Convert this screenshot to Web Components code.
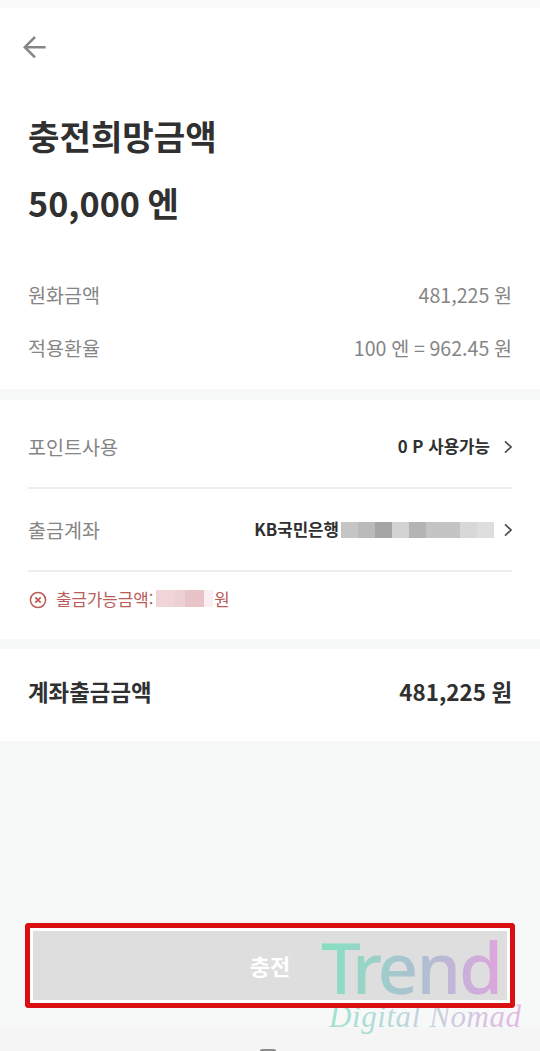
<!DOCTYPE html>
<html lang="ko">
<head>
<meta charset="utf-8">
<title>충전</title>
<style>
  html, body {
    margin: 0;
    height: 100%;
    overflow: hidden;
  }
  body {
    background-color: #f7f9f9;
    color: #303030;
    font-family: "Noto Sans CJK KR", "Noto Sans", sans-serif;
  }
</style>
</head>
<body>
<kk-charge-page></kk-charge-page>
<script>
class KkElement extends HTMLElement {

  constructor() {
    super();
    this.attachShadow({mode: 'open'});
    this.shadowRoot.innerHTML = this.constructor.TEMPLATE;
  }

}

class BackButton extends KkElement {

  static TAG = 'kk-back-button';

  static TEMPLATE = `
<style>
  :host {
    display: block;
    height: 24px;
  }
  svg {
    display: block;
  }
</style>
<svg width="25" height="24" viewBox="0 0 25 24" fill="none" stroke="#868686" stroke-width="2.5">
  <path d="M24.6 12.2H3.6M14 2L3.8 12.2L14 22.4"/>
</svg>
`;

}

class InfoRow extends KkElement {

  static TAG = 'kk-info-row';

  static TEMPLATE = `
<style>
  :host {
    display: flex;
    justify-content: space-between;
    align-items: center;
    height: 53px;
    font-size: 19.6px;
    line-height: 28px;
    color: #858585;
    white-space: nowrap;
    word-spacing: -.8px;
  }
  :host([total]) {
    height: 84px;
    font-size: 22.4px;
    font-weight: 700;
    color: #303030;
  }
</style>
<span><slot name="label"></slot></span>
<span><slot></slot></span>
`;

}

class LinkRow extends KkElement {

  static TAG = 'kk-link-row';

  static TEMPLATE = `
<style>
  :host {
    display: flex;
    align-items: center;
    box-sizing: border-box;
    border-bottom: 2px solid #ededed;
    font-size: 19.6px;
    white-space: nowrap;
  }
  .label {
    flex: 1;
    color: #858585;
  }
  .value {
    display: flex;
    align-items: center;
    font-size: 16.8px;
    font-weight: 700;
  }
  svg {
    display: block;
    margin: 2px 0 0 14px;
  }
</style>
<span class="label"><slot name="label"></slot></span>
<span class="value"><slot></slot></span>
<svg width="8" height="14" viewBox="0 0 8 14" fill="none" stroke="#4a4a4a" stroke-width="1.6">
  <path d="M1 1.4L7 7L1 12.6"/>
</svg>
`;

}

// row of flat blocks which hides a private number, colors="#aaa #bbb ..."
class MaskedValue extends HTMLElement {

  static TAG = 'kk-masked-value';

  constructor() {
    super();
    this.attachShadow({mode: 'open'});
  }

  connectedCallback() {
    const blocks = this.getAttribute('colors').split(' ')
      .map((color) => `<i style="background-color: ${color}"></i>`)
      .join('');
    this.shadowRoot.innerHTML = `
<style>
  :host {
    display: flex;
    flex: none;
  }
  i {
    flex: 1;
  }
</style>
${blocks}`;
  }

}

class ErrorNote extends KkElement {

  static TAG = 'kk-error-note';

  static TEMPLATE = `
<style>
  :host {
    display: flex;
    align-items: center;
    height: 53px;
    font-size: 16.8px;
    color: #b95c5a;
    white-space: nowrap;
  }
  svg {
    display: block;
    margin: 2px 9px 0 1px;
  }
</style>
<svg width="18" height="18" viewBox="0 0 18 18" fill="none" stroke="#b95c5a">
  <circle cx="9" cy="9" r="7.6" stroke-width="1.5"/>
  <path d="M6.3 6.3L11.7 11.7M11.7 6.3L6.3 11.7" stroke-width="1.8"/>
</svg>
<slot></slot>
`;

}

class ChargeButton extends KkElement {

  static TAG = 'kk-charge-button';

  static TEMPLATE = `
<style>
  :host {
    display: block;
    box-sizing: border-box;
    width: 490px;
    height: 85px;
    padding: 3px;
    border: 5px solid #d90f12;
    border-radius: 4px;
    background-color: #fff;
  }
  button {
    display: block;
    width: 100%;
    height: 100%;
    padding: 0 0 2px;
    border: 0;
    background-color: #dedede;
    color: #fff;
    font: inherit;
    font-size: 22px;
    font-weight: 700;
  }
</style>
<button type="button"><slot></slot></button>
`;

}

class Watermark extends KkElement {

  static TAG = 'kk-watermark';

  static TEMPLATE = `
<style>
  :host {
    display: block;
    pointer-events: none;
  }
  svg {
    display: block;
  }
</style>
<svg width="220" height="151" viewBox="320 900 220 151">
  <defs>
    <linearGradient id="tint" gradientUnits="userSpaceOnUse" x1="322" y1="0" x2="500" y2="0">
      <stop offset="0" stop-color="#86dfc2"/>
      <stop offset=".25" stop-color="#99d3c7"/>
      <stop offset=".5" stop-color="#a9c3cf"/>
      <stop offset=".75" stop-color="#c3b4d8"/>
      <stop offset="1" stop-color="#dda5dd"/>
    </linearGradient>
    <linearGradient id="script" gradientUnits="userSpaceOnUse" x1="327" y1="0" x2="522" y2="0">
      <stop offset="0" stop-color="#9fe3ce"/>
      <stop offset=".5" stop-color="#c5d3dc"/>
      <stop offset="1" stop-color="#e3b9e3"/>
    </linearGradient>
  </defs>
  <text x="321 352 377.5 416.5 459" y="993.5" font-family="Noto Sans, Open Sans, sans-serif" font-size="71"
    font-weight="500" fill="url(#tint)">Trend</text>
  <text x="329" y="1027" font-family="Liberation Serif, serif" font-size="31" font-style="italic"
    textLength="192" fill="url(#script)">Digital Nomad</text>
</svg>
`;

}

class ChargePage extends KkElement {

  static TAG = 'kk-charge-page';

  static TEMPLATE = `
<style>
  :host {
    display: grid;
    grid-template-rows: 8px 381px 250px 102px 1fr 23px;
    position: relative;
    width: 540px;
    height: 1051px;
    overflow: hidden;
  }
  :host > * {
    box-sizing: border-box;
  }
  .status {
    background-color: #fafafa;
  }
  section {
    padding: 0 28px;
    background-color: #fff;
  }
  .amount {
    padding-top: 27px;
  }
  kk-back-button {
    margin-left: -7px;
  }
  h1 {
    margin: 43px 0 0;
    font-size: 34.2px;
    line-height: 67px;
    font-weight: 700;
    word-spacing: -2px;
  }
  .rates {
    margin-top: 32px;
  }
  .payment {
    margin-top: 11px;
  }
  .total {
    margin-top: 10px;
  }
  .points {
    height: 89px;
    padding-top: 5px;
  }
  .account {
    height: 83px;
    padding-bottom: 1px;
  }
  .account-mask {
    width: 153px;
    height: 16px;
    margin-top: 2px;
    margin-left: 2px;
    margin-right: -4px;
  }
  .amount-mask {
    width: 57px;
    height: 17px;
    margin: 0 1px 0 3px;
  }
  .footer {
    padding: 182px 25px 0;
  }
  .nav {
    display: flex;
    justify-content: center;
    align-items: flex-end;
    background-color: #f5f5f5;
  }
  .nav i {
    width: 16px;
    height: 2px;
    margin-right: 5px;
    border-radius: 8px 8px 0 0;
    background-color: #8c8c8c;
  }
  kk-watermark {
    position: absolute;
    left: 320px;
    top: 900px;
  }
  /* the frame stays above the watermark */
  .rim {
    position: absolute;
    left: 25px;
    top: 923px;
    width: 490px;
    height: 85px;
    border: 5px solid #d90f12;
    border-radius: 4px;
    pointer-events: none;
  }
</style>
<div class="status"></div>
<section class="amount">
  <kk-back-button></kk-back-button>
  <h1>충전희망금액<br>50,000 엔</h1>
  <div class="rates">
    <kk-info-row><span slot="label">원화금액</span>481,225 원</kk-info-row>
    <kk-info-row><span slot="label">적용환율</span>100 엔 = 962.45 원</kk-info-row>
  </div>
</section>
<section class="payment">
  <kk-link-row class="points"><span slot="label">포인트사용</span>0 P 사용가능</kk-link-row>
  <kk-link-row class="account"><span slot="label">출금계좌</span>KB국민은행<kk-masked-value class="account-mask"
    colors="#c5c5c5 #bababa #a5a5a5 #d2d2d2 #b4b4b4 #c4c4c4 #c4c4c4 #d8d8d8 #dedede"></kk-masked-value></kk-link-row>
  <kk-error-note>출금가능금액:<kk-masked-value class="amount-mask"
    colors="#efd5d8 #efd5d8 #ecd0d3 #e8c3c8 #e8c3c8 #faf0f2"></kk-masked-value>원</kk-error-note>
</section>
<section class="total">
  <kk-info-row total><span slot="label">계좌출금금액</span>481,225 원</kk-info-row>
</section>
<div class="footer">
  <kk-charge-button>충전</kk-charge-button>
</div>
<div class="nav"><i></i></div>
<kk-watermark></kk-watermark>
<div class="rim"></div>
`;

}

[BackButton, InfoRow, LinkRow, MaskedValue, ErrorNote, ChargeButton, Watermark, ChargePage]
  .forEach((element) => customElements.define(element.TAG, element));
</script>
</body>
</html>
